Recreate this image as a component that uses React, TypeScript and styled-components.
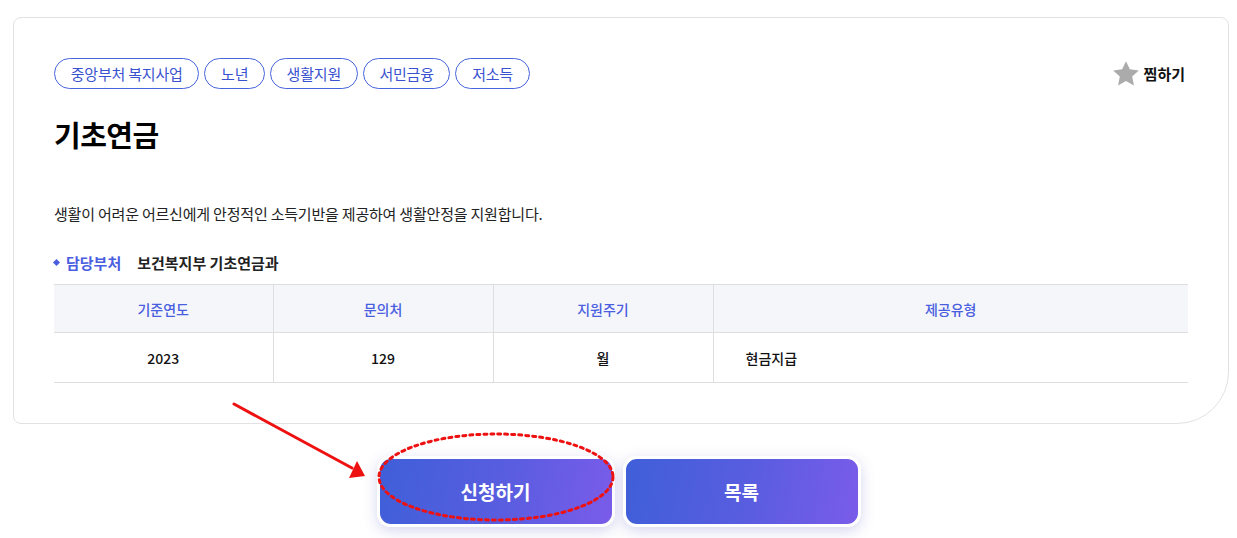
import styled, { createGlobalStyle } from 'styled-components';

const GlobalStyle = createGlobalStyle`
  html, body {
    margin: 0;
    padding: 0;
    background: #fff;
    font-family: 'Noto Sans CJK KR', 'Noto Sans', sans-serif;
    color: #111;
  }
`;

const tags = ['중앙부처 복지사업', '노년', '생활지원', '서민금융', '저소득'];

const columns = [
  { head: '기준연도', value: '2023', width: 219, align: 'center' },
  { head: '문의처', value: '129', width: 220, align: 'center' },
  { head: '지원주기', value: '월', width: 220, align: 'center' },
  { head: '제공유형', value: '현금지급', width: 0, align: 'left' },
];

const App = () => {
  return (
    <>
      <GlobalStyle />
      <Page>
        <Card>
          <TopRow>
            <TagList>
              {tags.map((t) => (
                <Tag key={t}>{t}</Tag>
              ))}
            </TagList>
            <Bookmark>
              <svg width="28" height="28" viewBox="0 0 24 24">
                <path
                  d="M12 1l3.3 7 7.7.9-5.7 5.3 1.5 7.6L12 18l-6.8 3.8 1.5-7.6L1 8.9 8.7 8z"
                  fill="#ababab"
                />
              </svg>
              찜하기
            </Bookmark>
          </TopRow>
          <Title>기초연금</Title>
          <Desc>생활이 어려운 어르신에게 안정적인 소득기반을 제공하여 생활안정을 지원합니다.</Desc>
          <DeptRow>
            <DeptLabel>담당부처</DeptLabel>
            <DeptValue>보건복지부 기초연금과</DeptValue>
          </DeptRow>
          <InfoTable>
            <colgroup>
              {columns.map((c) => (
                <col key={c.head} style={c.width ? { width: c.width } : undefined} />
              ))}
            </colgroup>
            <thead>
              <tr>
                {columns.map((c) => (
                  <Th key={c.head}>{c.head}</Th>
                ))}
              </tr>
            </thead>
            <tbody>
              <tr>
                {columns.map((c) => (
                  <Td key={c.head} $align={c.align}>
                    {c.value}
                  </Td>
                ))}
              </tr>
            </tbody>
          </InfoTable>
        </Card>
        <ButtonRow>
          <ActionButton>신청하기</ActionButton>
          <ActionButton>목록</ActionButton>
        </ButtonRow>
        <Annotation width="1237" height="538" viewBox="0 0 1237 538">
          <ellipse
            cx="496"
            cy="477"
            rx="117"
            ry="43"
            fill="none"
            stroke="#ee1111"
            strokeWidth="3"
            strokeDasharray="3 4"
            strokeLinecap="round"
          />
          <line x1="234" y1="404" x2="352" y2="468" stroke="#ee1111" strokeWidth="3" strokeLinecap="round" />
          <polygon points="365,476 349,478 357,461" fill="#ee1111" />
        </Annotation>
      </Page>
    </>
  );
};

export default App;

const Page = styled.div`
  width: 1237px;
  height: 538px;
  box-sizing: border-box;
  padding: 17px 8px 0 13px;
  overflow: hidden;
`;

const Card = styled.div`
  box-sizing: border-box;
  width: 1216px;
  border: 1px solid #e2e2e2;
  border-radius: 8px 8px 52px 8px;
  padding: 40px;
  background: #fff;
`;

const TopRow = styled.div`
  display: flex;
  justify-content: space-between;
  align-items: center;
`;

const TagList = styled.div`
  display: flex;
  gap: 5px;
`;

const Tag = styled.span`
  box-sizing: border-box;
  height: 31px;
  padding: 0 15.7px;
  display: flex;
  align-items: center;
  border: 1px solid #4763dc;
  border-radius: 16px;
  color: #3a52cf;
  font-size: 15px;
  letter-spacing: -0.2px;
`;

const Bookmark = styled.div`
  display: flex;
  align-items: center;
  gap: 4px;
  font-size: 15px;
  font-weight: 700;
  color: #111;
  margin-right: 3px;
`;

const Title = styled.h1`
  margin: 24px 0 0;
  font-size: 29px;
  font-weight: 700;
  line-height: 42px;
  letter-spacing: -0.5px;
  color: #000;
`;

const Desc = styled.p`
  margin: 48px 0 0;
  font-size: 15px;
  line-height: 22px;
  color: #222;
  letter-spacing: -0.2px;
`;

const DeptRow = styled.div`
  display: flex;
  align-items: center;
  gap: 16px;
  margin-top: 26px;
  height: 22px;
  font-size: 15px;
  font-weight: 700;
`;

const DeptLabel = styled.span`
  color: #4a5ee0;
  display: flex;
  align-items: center;
  &::before {
    content: '';
    width: 5px;
    height: 5px;
    background: #4a5ee0;
    transform: rotate(45deg);
    margin-right: 7px;
  }
`;

const DeptValue = styled.span`
  color: #222;
`;

const InfoTable = styled.table`
  width: 100%;
  margin-top: 11px;
  border-collapse: collapse;
  table-layout: fixed;
  border-top: 1px solid #dedede;
`;

const Th = styled.th`
  height: 47px;
  padding: 0;
  background: #f5f6fa;
  color: #4a5ee0;
  font-size: 14px;
  font-weight: 500;
  border-bottom: 1px solid #dedede;
  border-left: 1px solid #dedede;
  &:first-child {
    border-left: none;
  }
`;

const Td = styled.td<{ $align: string }>`
  height: 49px;
  text-align: ${(p) => p.$align};
  padding: ${(p) => (p.$align === 'left' ? '0 0 0 32px' : '0')};
  font-size: 14px;
  font-weight: 500;
  color: #111;
  border-bottom: 1px solid #dedede;
  border-left: 1px solid #dedede;
  &:first-child {
    border-left: none;
  }
`;

const ButtonRow = styled.div`
  display: flex;
  justify-content: center;
  gap: 8px;
  margin-top: 32px;
  margin-left: -13px;
  margin-right: -8px;
`;

const ActionButton = styled.button`
  box-sizing: border-box;
  width: 238px;
  height: 71px;
  border: 3px solid #fff;
  border-radius: 14px;
  background: linear-gradient(100deg, #3f5fd8 0%, #5a5de0 55%, #7a5ce9 100%);
  box-shadow: 0 4px 14px rgba(90, 90, 200, 0.25);
  color: #fff;
  font-family: inherit;
  font-size: 19px;
  font-weight: 700;
  cursor: pointer;
`;

const Annotation = styled.svg`
  position: absolute;
  left: 0;
  top: 0;
  pointer-events: none;
`;
